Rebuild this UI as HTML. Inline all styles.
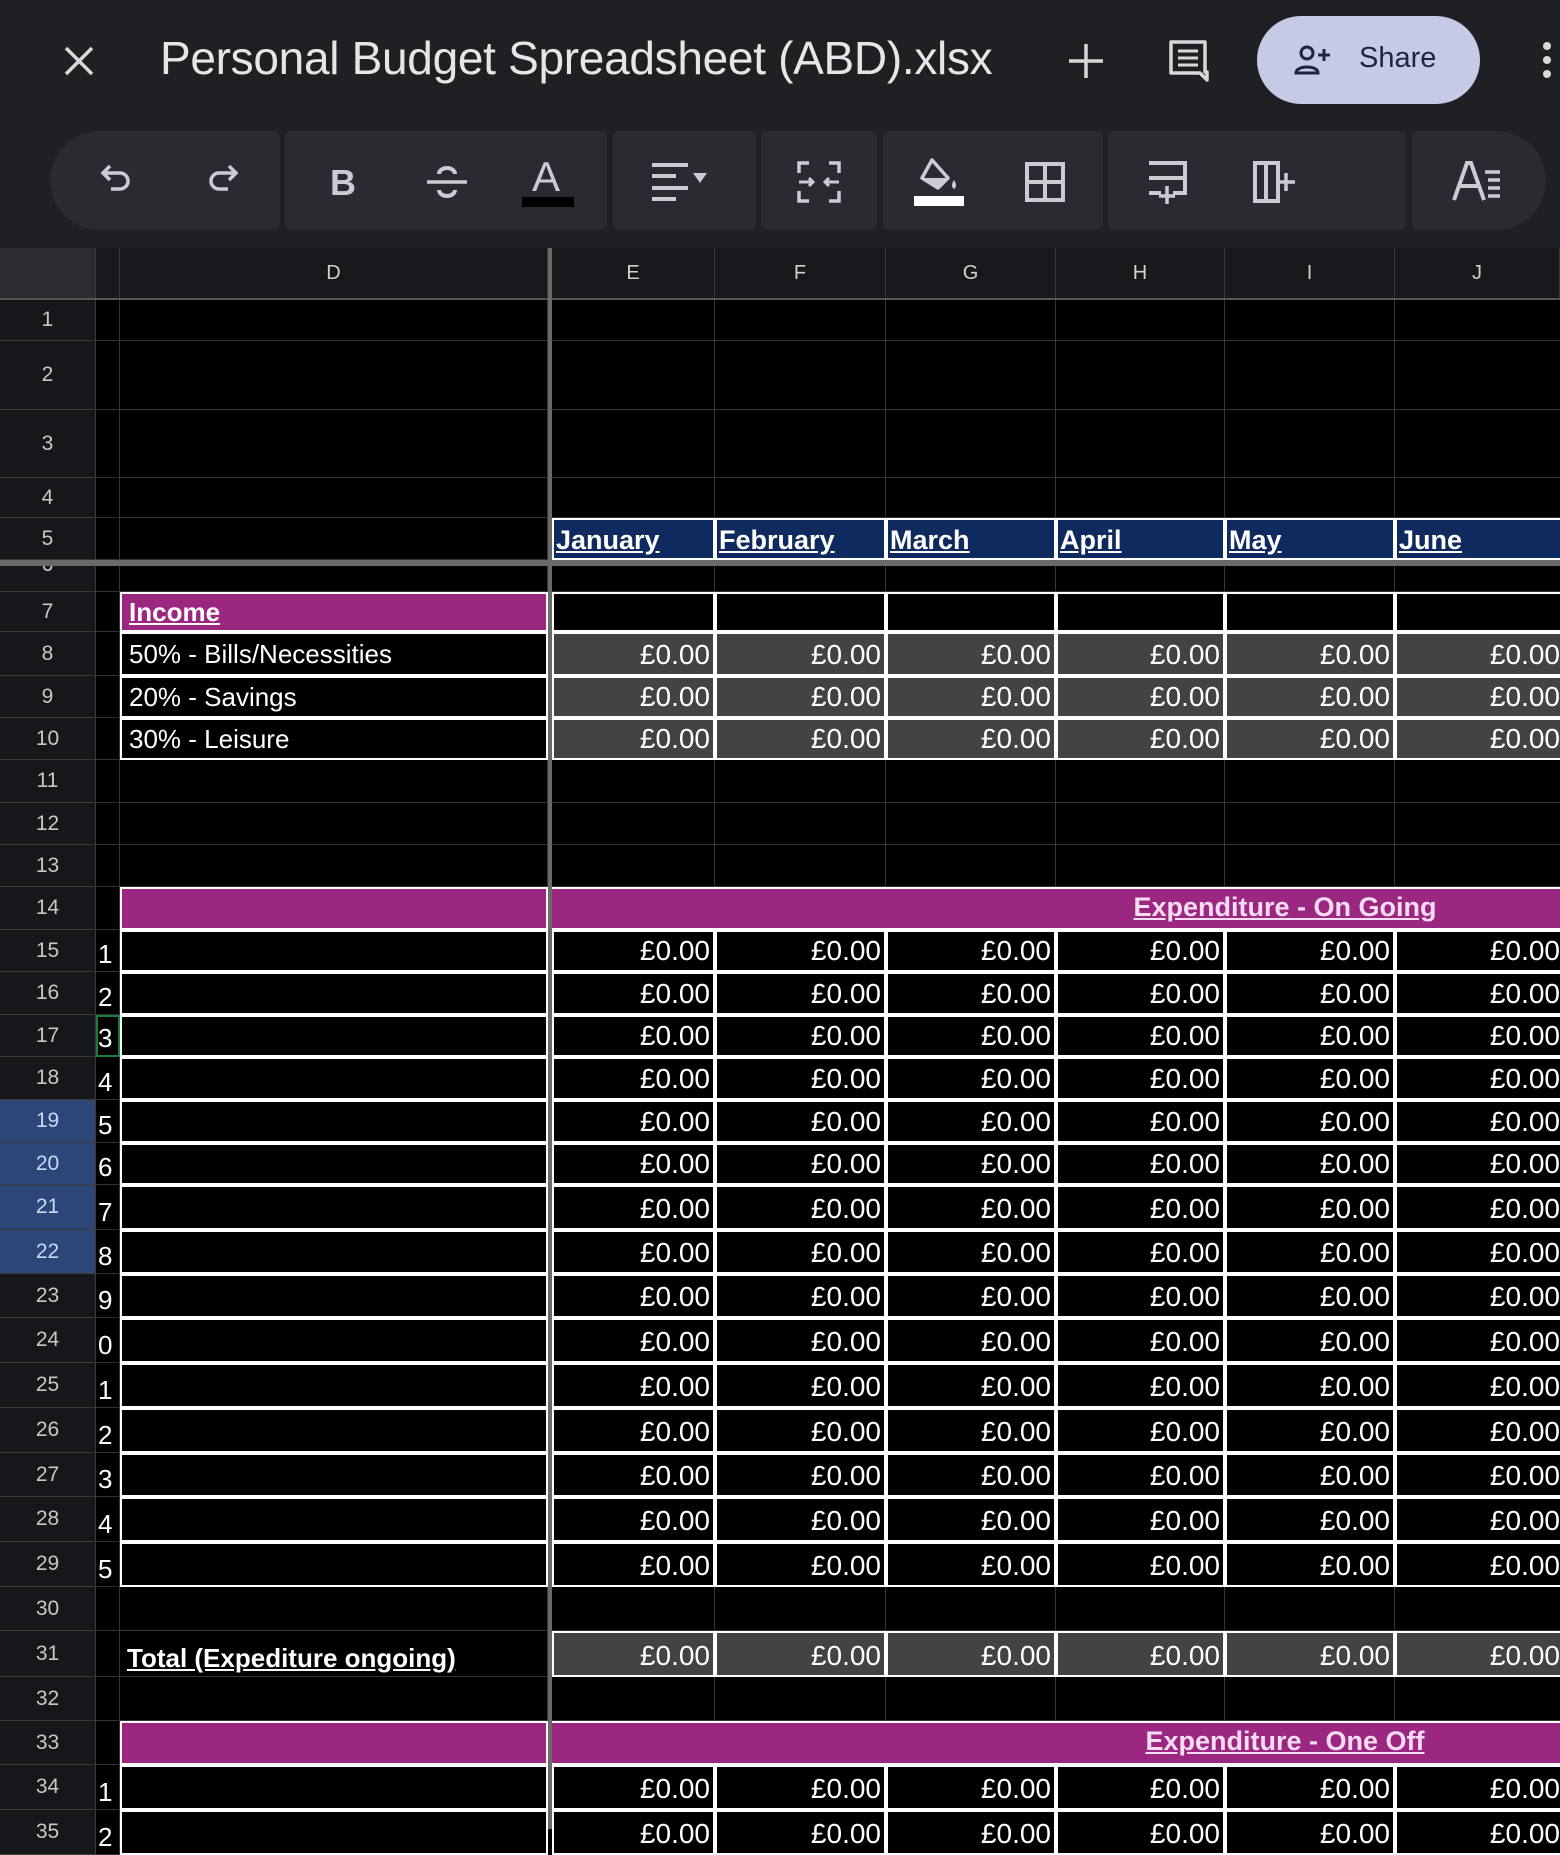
<!DOCTYPE html>
<html><head><meta charset="utf-8"><style>
*{margin:0;padding:0}
body{width:1560px;height:1829px;overflow:hidden;background:#000;font-family:"Liberation Sans",sans-serif;position:relative}
#top{position:absolute;left:0;top:0;width:1560px;height:248px;background:#1f2024}
.title{position:absolute;left:160px;top:31px;font-size:46px;color:#e6e6e6;white-space:nowrap;letter-spacing:-0.3px}
.share{position:absolute;left:1257px;top:16px;width:223px;height:88px;border-radius:44px;background:#c6cae4}
.share span{position:absolute;left:102px;top:26px;font-size:29px;color:#1d2740}
.seg{position:absolute;top:131px;height:99px;background:#2a2b30}
.ic{position:absolute}
#ch{position:absolute;left:0;top:248px;width:1560px;height:50px;background:#17181b;border-bottom:2px solid #555}
#ch div{position:absolute;top:0;height:50px;line-height:50px;text-align:center;color:#d0d0d0;font-size:20px;border-right:1px solid #3a3a3a;box-sizing:border-box}
.r{position:absolute;left:0;width:1560px}
.r>*{position:absolute;top:0;bottom:0;box-sizing:border-box;display:flex;font-style:normal;text-decoration:none}
.n{left:0;width:96px;background:#16171b;color:#c8c8c8;font-size:21px;align-items:center;justify-content:center;border-bottom:1px solid #3c3c3c;border-right:1px solid #3c3c3c;font-weight:normal}
.n.sel{background:#2c4677;color:#c9d8ff}
.c{left:96px;width:24px;color:#fff;font-size:26px;border-right:1px solid #333;border-bottom:1px solid #333;align-items:flex-end;padding-left:2px;line-height:34px}
.D{left:120px;width:428px}.E{left:552px;width:163px}.F{left:715px;width:171px}.G{left:886px;width:170px}.H{left:1056px;width:169px}.I{left:1225px;width:170px}.J{left:1395px;width:170px}
.g{border-right:1px solid #353535;border-bottom:1px solid #353535}
.w{border:2px solid #fff}
.k{background:#434343}
.p{background:#9c2780}
.m{background:#0f2a5e;color:#fff;font-weight:bold;font-size:27px;align-items:flex-end;padding:0 0 2px 2px;text-decoration:underline !important}
.a{color:#fff;font-size:28px;justify-content:flex-end;align-items:flex-end;padding:0 3px 0 0;line-height:38px}
.t{color:#fff;font-size:26px;align-items:center;padding-left:7px}
.u{text-decoration:underline !important;font-weight:bold}
.hx{left:552px;right:0;border-top:2px solid #fff;border-bottom:2px solid #fff}
.hx span{position:absolute;left:733px;top:3px;transform:translateX(-50%);color:#f6dcf2;font-weight:bold;font-size:27px;text-decoration:underline;white-space:nowrap}
</style></head><body>
<div id="top">
<svg class="ic" style="left:62px;top:44px" width="34" height="34" viewBox="0 0 34 34"><path d="M4 4L30 30M30 4L4 30" stroke="#d8d8d8" stroke-width="3.5"/></svg>
<div class="title">Personal Budget Spreadsheet (ABD).xlsx</div>
<svg class="ic" style="left:1067px;top:42px" width="38" height="38" viewBox="0 0 38 38"><path d="M19 2V36M2 19H36" stroke="#d8d8d8" stroke-width="3.5"/></svg>
<svg class="ic" style="left:1166px;top:38px" width="44" height="46" viewBox="0 0 44 46"><path d="M5 4H39V34H41V42L34 35H5Z" fill="none" stroke="#d8d8d8" stroke-width="3.5" stroke-linejoin="round"/><path d="M12 13H32M12 20H32M12 27H32" stroke="#d8d8d8" stroke-width="3"/></svg>
<div class="share"><svg class="ic" style="left:36px;top:28px" width="40" height="32" viewBox="0 0 40 32"><circle cx="14" cy="9" r="6" fill="none" stroke="#1d2740" stroke-width="3"/><path d="M3 29C3 21 25 21 25 29Z" fill="none" stroke="#1d2740" stroke-width="3"/><path d="M31 5V17M25 11H37" stroke="#1d2740" stroke-width="3"/></svg><span>Share</span></div>
<svg class="ic" style="left:1540px;top:40px" width="14" height="40" viewBox="0 0 14 40"><circle cx="7" cy="6" r="4" fill="#d8d8d8"/><circle cx="7" cy="20" r="4" fill="#d8d8d8"/><circle cx="7" cy="34" r="4" fill="#d8d8d8"/></svg>
<div class="seg" style="left:50px;width:230px;border-radius:50px 6px 6px 50px"></div>
<div class="seg" style="left:285px;width:322px;border-radius:6px"></div>
<div class="seg" style="left:613px;width:143px;border-radius:6px"></div>
<div class="seg" style="left:761px;width:116px;border-radius:6px"></div>
<div class="seg" style="left:883px;width:220px;border-radius:6px"></div>
<div class="seg" style="left:1108px;width:298px;border-radius:6px"></div>
<div class="seg" style="left:1412px;width:134px;border-radius:6px 50px 50px 6px"></div>
<svg class="ic" style="left:100px;top:162px" width="36" height="36" viewBox="0 0 36 36"><path d="M10 4L3 11L10 18M3 11H20A8 8 0 0 1 20 27H11" fill="none" stroke="#c9ccd4" stroke-width="3.5"/></svg>
<svg class="ic" style="left:203px;top:162px" width="36" height="36" viewBox="0 0 36 36"><path d="M26 4L33 11L26 18M33 11H16A8 8 0 0 0 16 27H25" fill="none" stroke="#c9ccd4" stroke-width="3.5"/></svg>
<div class="ic" style="left:330px;top:162px;font-size:36px;font-weight:bold;color:#c9ccd4">B</div>
<svg class="ic" style="left:425px;top:160px" width="44" height="44" viewBox="0 0 44 44"><path d="M2 22H42" stroke="#c9ccd4" stroke-width="3.5"/><path d="M14 14A8 6 0 0 1 30 14M14 30A8 6 0 0 0 30 30" fill="none" stroke="#c9ccd4" stroke-width="4"/></svg>
<div class="ic" style="left:532px;top:156px;font-size:42px;color:#c9ccd4;line-height:42px">A</div>
<div class="ic" style="left:522px;top:197px;width:52px;height:10px;background:#000"></div>
<svg class="ic" style="left:650px;top:162px" width="60" height="40" viewBox="0 0 60 40"><path d="M2 3H38M2 14H26M2 26H38M2 37H26" stroke="#c9ccd4" stroke-width="4"/><path d="M43 11H57L50 21Z" fill="#c9ccd4"/></svg>
<svg class="ic" style="left:797px;top:160px" width="44" height="44" viewBox="0 0 44 44"><path d="M12 3H2V13M32 3H42V13M12 41H2V31M32 41H42V31" fill="none" stroke="#c9ccd4" stroke-width="3.5"/><path d="M2 22H16M12 18L16 22L12 26M42 22H28M32 18L28 22L32 26" fill="none" stroke="#c9ccd4" stroke-width="3"/></svg>
<svg class="ic" style="left:912px;top:158px" width="56" height="50" viewBox="0 0 56 50"><path d="M20 2L36 20L26 30L10 20Z" fill="none" stroke="#c9ccd4" stroke-width="3.5" stroke-linejoin="round"/><path d="M10 20H36L26 30Z" fill="#c9ccd4"/><path d="M42 22Q46 28 42 31Q38 28 42 22Z" fill="#c9ccd4"/><rect x="2" y="38" width="50" height="10" fill="#fff"/></svg>
<svg class="ic" style="left:1024px;top:161px" width="42" height="42" viewBox="0 0 42 42"><path d="M3 3H39V39H3ZM21 3V39M3 21H39" fill="none" stroke="#c9ccd4" stroke-width="4"/></svg>
<svg class="ic" style="left:1146px;top:160px" width="42" height="48" viewBox="0 0 42 48"><path d="M3 3H39V33H27M15 33H3ZM3 18H39" fill="none" stroke="#c9ccd4" stroke-width="4"/><path d="M21 26V44M13 36H29" stroke="#c9ccd4" stroke-width="3.5"/></svg>
<svg class="ic" style="left:1252px;top:160px" width="46" height="44" viewBox="0 0 46 44"><path d="M3 3H26V41H3ZM14 3V41" fill="none" stroke="#c9ccd4" stroke-width="4"/><path d="M34 13V31M25 22H43" stroke="#c9ccd4" stroke-width="3.5"/></svg>
<svg class="ic" style="left:1452px;top:160px" width="52" height="44" viewBox="0 0 52 44"><path d="M2 40L15 3H19L32 40M8 26H26" fill="none" stroke="#c9ccd4" stroke-width="4"/><path d="M33 12H48M36 20H48M36 28H48M36 36H48" stroke="#c9ccd4" stroke-width="3.5"/></svg>
</div>
<div id="ch">
<div style="left:0;width:96px;background:#2b2c30"></div>
<div style="left:96px;width:24px"></div>
<div style="left:120px;width:428px">D</div>
<div style="left:552px;width:163px">E</div>
<div style="left:715px;width:171px">F</div>
<div style="left:886px;width:170px">G</div>
<div style="left:1056px;width:169px">H</div>
<div style="left:1225px;width:170px">I</div>
<div style="left:1395px;width:165px">J</div>
</div>

<div class="r" style="top:300px;height:41px"><b class="n">1</b><i class="c"></i><i class="D g"></i><i class="E g"></i><i class="F g"></i><i class="G g"></i><i class="H g"></i><i class="I g"></i><i class="J g"></i></div>
<div class="r" style="top:341px;height:69px"><b class="n">2</b><i class="c"></i><i class="D g"></i><i class="E g"></i><i class="F g"></i><i class="G g"></i><i class="H g"></i><i class="I g"></i><i class="J g"></i></div>
<div class="r" style="top:410px;height:68px"><b class="n">3</b><i class="c"></i><i class="D g"></i><i class="E g"></i><i class="F g"></i><i class="G g"></i><i class="H g"></i><i class="I g"></i><i class="J g"></i></div>
<div class="r" style="top:478px;height:40px"><b class="n">4</b><i class="c"></i><i class="D g"></i><i class="E g"></i><i class="F g"></i><i class="G g"></i><i class="H g"></i><i class="I g"></i><i class="J g"></i></div>
<div class="r" style="top:518px;height:42px"><b class="n">5</b><i class="c"></i><i class="D g"></i><i class="E w m">January</i><i class="F w m">February</i><i class="G w m">March</i><i class="H w m">April</i><i class="I w m">May</i><i class="J w m">June</i></div>
<div style="position:absolute;left:0;top:560px;width:1560px;height:6px;background:#6a6a6a"></div>
<div class="r" style="top:566px;height:26px"><b class="n" style="align-items:flex-start;line-height:10px;overflow:hidden"><span style="margin-top:-6px">6</span></b><i class="c"></i><i class="D g"></i><i class="E g"></i><i class="F g"></i><i class="G g"></i><i class="H g"></i><i class="I g"></i><i class="J g"></i></div>
<div class="r" style="top:592px;height:40px"><b class="n">7</b><i class="c"></i><i class="D w p t"><span class="u">Income</span></i><i class="E w"></i><i class="F w"></i><i class="G w"></i><i class="H w"></i><i class="I w"></i><i class="J w"></i></div>
<div class="r" style="top:632px;height:44px"><b class="n">8</b><i class="c"></i><i class="D w t">50% - Bills/Necessities</i><i class="E w k a">£0.00</i><i class="F w k a">£0.00</i><i class="G w k a">£0.00</i><i class="H w k a">£0.00</i><i class="I w k a">£0.00</i><i class="J w k a">£0.00</i></div>
<div class="r" style="top:676px;height:42px"><b class="n">9</b><i class="c"></i><i class="D w t">20% - Savings</i><i class="E w k a">£0.00</i><i class="F w k a">£0.00</i><i class="G w k a">£0.00</i><i class="H w k a">£0.00</i><i class="I w k a">£0.00</i><i class="J w k a">£0.00</i></div>
<div class="r" style="top:718px;height:42px"><b class="n">10</b><i class="c"></i><i class="D w t">30% - Leisure</i><i class="E w k a">£0.00</i><i class="F w k a">£0.00</i><i class="G w k a">£0.00</i><i class="H w k a">£0.00</i><i class="I w k a">£0.00</i><i class="J w k a">£0.00</i></div>
<div class="r" style="top:760px;height:43px"><b class="n">11</b><i class="c"></i><i class="D g"></i><i class="E g"></i><i class="F g"></i><i class="G g"></i><i class="H g"></i><i class="I g"></i><i class="J g"></i></div>
<div class="r" style="top:803px;height:42px"><b class="n">12</b><i class="c"></i><i class="D g"></i><i class="E g"></i><i class="F g"></i><i class="G g"></i><i class="H g"></i><i class="I g"></i><i class="J g"></i></div>
<div class="r" style="top:845px;height:42px"><b class="n">13</b><i class="c"></i><i class="D g"></i><i class="E g"></i><i class="F g"></i><i class="G g"></i><i class="H g"></i><i class="I g"></i><i class="J g"></i></div>
<div class="r" style="top:887px;height:43px"><b class="n">14</b><i class="c"></i><i class="D w p"></i><i class="hx p"><span>Expenditure - On Going</span></i></div>
<div class="r" style="top:930px;height:42px"><b class="n">15</b><i class="c">1</i><i class="D w"></i><i class="E w a">£0.00</i><i class="F w a">£0.00</i><i class="G w a">£0.00</i><i class="H w a">£0.00</i><i class="I w a">£0.00</i><i class="J w a">£0.00</i></div>
<div class="r" style="top:972px;height:43px"><b class="n">16</b><i class="c">2</i><i class="D w"></i><i class="E w a">£0.00</i><i class="F w a">£0.00</i><i class="G w a">£0.00</i><i class="H w a">£0.00</i><i class="I w a">£0.00</i><i class="J w a">£0.00</i></div>
<div class="r" style="top:1015px;height:42px"><b class="n">17</b><i class="c" style="border:2px solid #1e7a3a;padding-left:0">3</i><i class="D w"></i><i class="E w a">£0.00</i><i class="F w a">£0.00</i><i class="G w a">£0.00</i><i class="H w a">£0.00</i><i class="I w a">£0.00</i><i class="J w a">£0.00</i></div>
<div class="r" style="top:1057px;height:43px"><b class="n">18</b><i class="c">4</i><i class="D w"></i><i class="E w a">£0.00</i><i class="F w a">£0.00</i><i class="G w a">£0.00</i><i class="H w a">£0.00</i><i class="I w a">£0.00</i><i class="J w a">£0.00</i></div>
<div class="r" style="top:1100px;height:43px"><b class="n sel">19</b><i class="c">5</i><i class="D w"></i><i class="E w a">£0.00</i><i class="F w a">£0.00</i><i class="G w a">£0.00</i><i class="H w a">£0.00</i><i class="I w a">£0.00</i><i class="J w a">£0.00</i></div>
<div class="r" style="top:1143px;height:42px"><b class="n sel">20</b><i class="c">6</i><i class="D w"></i><i class="E w a">£0.00</i><i class="F w a">£0.00</i><i class="G w a">£0.00</i><i class="H w a">£0.00</i><i class="I w a">£0.00</i><i class="J w a">£0.00</i></div>
<div class="r" style="top:1185px;height:45px"><b class="n sel">21</b><i class="c">7</i><i class="D w"></i><i class="E w a">£0.00</i><i class="F w a">£0.00</i><i class="G w a">£0.00</i><i class="H w a">£0.00</i><i class="I w a">£0.00</i><i class="J w a">£0.00</i></div>
<div class="r" style="top:1230px;height:44px"><b class="n sel">22</b><i class="c">8</i><i class="D w"></i><i class="E w a">£0.00</i><i class="F w a">£0.00</i><i class="G w a">£0.00</i><i class="H w a">£0.00</i><i class="I w a">£0.00</i><i class="J w a">£0.00</i></div>
<div class="r" style="top:1274px;height:44px"><b class="n">23</b><i class="c">9</i><i class="D w"></i><i class="E w a">£0.00</i><i class="F w a">£0.00</i><i class="G w a">£0.00</i><i class="H w a">£0.00</i><i class="I w a">£0.00</i><i class="J w a">£0.00</i></div>
<div class="r" style="top:1318px;height:45px"><b class="n">24</b><i class="c">0</i><i class="D w"></i><i class="E w a">£0.00</i><i class="F w a">£0.00</i><i class="G w a">£0.00</i><i class="H w a">£0.00</i><i class="I w a">£0.00</i><i class="J w a">£0.00</i></div>
<div class="r" style="top:1363px;height:45px"><b class="n">25</b><i class="c">1</i><i class="D w"></i><i class="E w a">£0.00</i><i class="F w a">£0.00</i><i class="G w a">£0.00</i><i class="H w a">£0.00</i><i class="I w a">£0.00</i><i class="J w a">£0.00</i></div>
<div class="r" style="top:1408px;height:45px"><b class="n">26</b><i class="c">2</i><i class="D w"></i><i class="E w a">£0.00</i><i class="F w a">£0.00</i><i class="G w a">£0.00</i><i class="H w a">£0.00</i><i class="I w a">£0.00</i><i class="J w a">£0.00</i></div>
<div class="r" style="top:1453px;height:44px"><b class="n">27</b><i class="c">3</i><i class="D w"></i><i class="E w a">£0.00</i><i class="F w a">£0.00</i><i class="G w a">£0.00</i><i class="H w a">£0.00</i><i class="I w a">£0.00</i><i class="J w a">£0.00</i></div>
<div class="r" style="top:1497px;height:45px"><b class="n">28</b><i class="c">4</i><i class="D w"></i><i class="E w a">£0.00</i><i class="F w a">£0.00</i><i class="G w a">£0.00</i><i class="H w a">£0.00</i><i class="I w a">£0.00</i><i class="J w a">£0.00</i></div>
<div class="r" style="top:1542px;height:45px"><b class="n">29</b><i class="c">5</i><i class="D w"></i><i class="E w a">£0.00</i><i class="F w a">£0.00</i><i class="G w a">£0.00</i><i class="H w a">£0.00</i><i class="I w a">£0.00</i><i class="J w a">£0.00</i></div>
<div class="r" style="top:1587px;height:44px"><b class="n">30</b><i class="c"></i><i class="D g"></i><i class="E g"></i><i class="F g"></i><i class="G g"></i><i class="H g"></i><i class="I g"></i><i class="J g"></i></div>
<div class="r" style="top:1631px;height:46px"><b class="n">31</b><i class="c"></i><i class="D g t" style="align-items:flex-end;padding-bottom:2px"><span class="u">Total (Expediture ongoing)</span></i><i class="E w k a">£0.00</i><i class="F w k a">£0.00</i><i class="G w k a">£0.00</i><i class="H w k a">£0.00</i><i class="I w k a">£0.00</i><i class="J w k a">£0.00</i></div>
<div class="r" style="top:1677px;height:44px"><b class="n">32</b><i class="c"></i><i class="D g"></i><i class="E g"></i><i class="F g"></i><i class="G g"></i><i class="H g"></i><i class="I g"></i><i class="J g"></i></div>
<div class="r" style="top:1721px;height:44px"><b class="n">33</b><i class="c"></i><i class="D w p"></i><i class="hx p"><span>Expenditure - One Off</span></i></div>
<div class="r" style="top:1765px;height:45px"><b class="n">34</b><i class="c">1</i><i class="D w"></i><i class="E w a">£0.00</i><i class="F w a">£0.00</i><i class="G w a">£0.00</i><i class="H w a">£0.00</i><i class="I w a">£0.00</i><i class="J w a">£0.00</i></div>
<div class="r" style="top:1810px;height:45px"><b class="n">35</b><i class="c">2</i><i class="D w"></i><i class="E w a">£0.00</i><i class="F w a">£0.00</i><i class="G w a">£0.00</i><i class="H w a">£0.00</i><i class="I w a">£0.00</i><i class="J w a">£0.00</i></div>
<div style="position:absolute;left:548px;top:248px;width:4px;height:1581px;background:#6a6a6a"></div>
</body></html>
